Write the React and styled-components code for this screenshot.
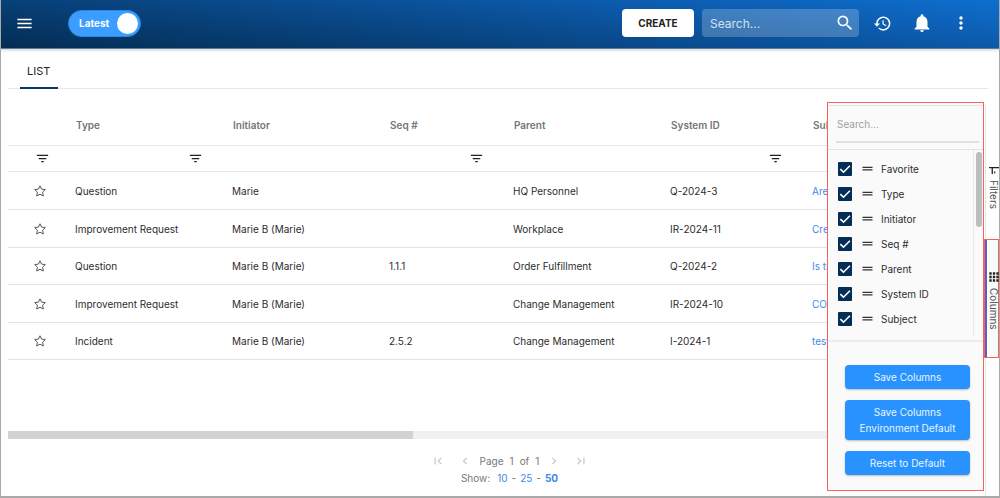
import React from "react";
import styled, { createGlobalStyle, css } from "styled-components";
import {
  MdMenu, MdSearch, MdHistory, MdNotifications, MdMoreVert, MdFilterList,
  MdDragHandle, MdFirstPage, MdLastPage, MdChevronLeft, MdChevronRight, MdApps,
} from "react-icons/md";

const GlobalStyle = createGlobalStyle`
  *, *::before, *::after { box-sizing: border-box; }
  body { margin: 0; background: #fff; }
  body, button, input { font-family: Inter, "Liberation Sans", sans-serif; }
  svg { display: block; }
`;

const plainButton = css`
  border: 0;
  padding: 0;
  background: none;
  color: inherit;
  cursor: pointer;
`;

const Frame = styled.div`
  display: flex;
  flex-direction: column;
  min-height: 100vh;
  border: solid #a9a9a9;
  border-width: 0 1px 2px;
  font-size: 10px;
  line-height: 16px;
  color: #2d2d2d;
  overflow: hidden;
`;

const Header = styled.header`
  display: flex;
  align-items: center;
  height: 49px;
  padding: 0 19px 2px 14px;
  background: linear-gradient(6deg, #042d54 0%, #073c70 25%, #0a4c90 50%, #0c5bad 72%, #0e6fce 100%);
  border-bottom: 1px solid #587ca5;
  box-shadow: 0 1px 3px rgba(0, 0, 0, 0.2);
  color: #fff;
`;

const IconButton = styled.button`
  ${plainButton}
  display: flex;
  align-items: center;
  justify-content: center;
  width: ${(p) => p.$width || "auto"};
`;

const Switch = styled.label`
  display: flex;
  align-items: center;
  justify-content: space-between;
  width: 73px;
  height: 27px;
  margin-left: 34px;
  padding: 0 2px 0 10px;
  border-radius: 14px;
  background: #3a9dff;
  border: 1px solid #2f86e0;
  font-size: 10px;
  font-weight: 700;
`;

const SwitchInput = styled.input`
  appearance: none;
  width: 21px;
  height: 21px;
  margin: 0;
  border-radius: 50%;
  background: #fff;
`;

const CreateButton = styled.button`
  ${plainButton}
  width: 72px;
  height: 28px;
  margin: 0 8px 0 auto;
  border-radius: 4px;
  background: #fff;
  color: #222;
  font-size: 10px;
  font-weight: 700;
`;

const SearchBox = styled.div`
  display: flex;
  align-items: center;
  width: 157px;
  height: 28px;
  margin-right: 4px;
  padding: 0 4px 0 8px;
  border-radius: 4px;
  background: rgba(255, 255, 255, 0.22);
`;

const HeaderInput = styled.input`
  flex: 1;
  min-width: 0;
  border: 0;
  padding: 0;
  outline: 0;
  background: none;
  color: #fff;
  font-size: 12px;
  &::placeholder { color: #d3e2f2; opacity: 1; }
`;

const Tabs = styled.nav`
  display: flex;
  height: 40px;
  margin: 0 11px 16px 7px;
  padding-left: 12px;
  border-bottom: 1px solid #e8e8e8;
`;

const Tab = styled.button`
  ${plainButton}
  height: 40px;
  padding: 6px 8px 0 7px;
  border-bottom: 2px solid #0a3763;
  font-size: 11px;
  color: #222;
`;

const Main = styled.main`
  flex: 1;
  display: grid;
  grid-template-columns: minmax(0, 1fr) 157px 15px;
  grid-template-rows: 1fr auto;
  padding-left: 7px;
`;

const GridArea = styled.section`
  display: flex;
  flex-direction: column;
  justify-content: space-between;
  overflow: hidden;
`;

const Table = styled.table`
  width: 1660px;
  table-layout: fixed;
  border-collapse: separate;
  border-spacing: 0;
`;

const HeadCell = styled.th`
  width: ${(p) => p.$width};
  height: 41px;
  padding: 0 0 0 1px;
  border-bottom: 1px solid #e8e8e8;
  text-align: left;
  font-weight: 600;
  color: #757575;
`;

const FilterCell = styled.td`
  height: 26px;
  padding: 0 29px 0 27px;
  border-bottom: 1px solid #e8e8e8;
`;

const FilterButton = styled(IconButton)`
  margin-left: ${(p) => (p.$start ? "0" : "auto")};
  color: #222;
`;

const Row = styled.tr`
  height: 38px;
  &:nth-child(2n + 3) { height: 37px; }
`;

const Cell = styled.td`
  padding: 0;
  border-bottom: 1px solid #e3e3e3;
`;

const StarCell = styled(Cell)`
  padding-left: 26px;
`;

const SubjectLink = styled.a`
  color: #3f87ea;
  text-decoration: none;
`;

const ScrollTrack = styled.div`
  height: 8px;
  background: #f0f0f0;
`;

const ScrollThumb = styled.div`
  width: 405px;
  height: 8px;
  background: #d3d3d3;
`;

const Pager = styled.footer`
  grid-column: 1 / -1;
  grid-row: 2;
  display: flex;
  flex-direction: column;
  align-items: center;
  padding: 13px 0 10px 12px;
  color: #777;
`;

const PagerLine = styled.div`
  display: flex;
  align-items: center;
  gap: ${(p) => p.$gap};
  height: 17px;
`;

const PageButton = styled(IconButton)`
  margin: 0 ${(p) => (p.$outer ? "5px" : "2px")};
  color: #c4c4c4;
`;

const PagerLabel = styled.span`
  margin-right: 3px;
`;

const PageLink = styled.a`
  color: #3f87ea;
  font-weight: ${(p) => (p.$current ? 700 : 400)};
  text-decoration: none;
`;

const Panel = styled.aside`
  grid-column: 2;
  grid-row: 1 / 3;
  display: flex;
  flex-direction: column;
  margin: -3px 0 5px;
  border: 1px solid #f4645c;
  background: #fafafa;
  z-index: 1;
`;

const PanelSearch = styled.div`
  padding: 6px 4px 6px 8px;
  margin-top: 2px;
  border-top: 1px solid #e6e6e6;
  border-bottom: 1px solid #e3e3e3;
`;

const PanelInput = styled.input`
  display: block;
  width: 100%;
  height: 31px;
  padding: 0 0 5px 1px;
  border: 0;
  border-bottom: 2px solid #e0e0e0;
  outline: 0;
  background: none;
  font-size: 10px;
  &::placeholder { color: #a0a0a0; opacity: 1; }
`;

const ColumnArea = styled.div`
  display: flex;
  height: 192px;
  padding-bottom: 5px;
  border-bottom: 2px solid #ececec;
`;

const ColumnList = styled.ul`
  flex: 1;
  margin: 0;
  padding: 6px 0 0 10px;
  border-right: 1px solid #e8e8e8;
  list-style: none;
`;

const ColumnItem = styled.li`
  height: 25px;
`;

const ColumnLabel = styled.label`
  display: flex;
  align-items: center;
  height: 25px;
`;

const CheckHolder = styled.span`
  display: grid;
  width: 14px;
  height: 14px;
  margin-right: 8px;
  & > * { grid-area: 1 / 1; }
`;

const CheckInput = styled.input`
  appearance: none;
  width: 14px;
  height: 14px;
  margin: 0;
  border-radius: 1px;
  background: #052e56;
`;

const DragIcon = styled(MdDragHandle)`
  margin-right: 6px;
  color: #333;
`;

const PanelScroll = styled.div`
  width: 9px;
  padding: 2px 0 0 2px;
`;

const PanelThumb = styled.div`
  width: 6px;
  height: 75px;
  border-radius: 3px;
  background: #bdbdbd;
`;

const PanelActions = styled.div`
  display: flex;
  flex-direction: column;
  gap: 11px;
  padding: 23px 13px 0 17px;
`;

const ActionButton = styled.button`
  ${plainButton}
  padding: 4px 8px;
  border-radius: 4px;
  background: #2893ff;
  box-shadow: 0 1px 2px rgba(0, 0, 0, 0.25);
  color: #eaf4ff;
  font-size: 10px;
  line-height: 16px;
`;

const SideBar = styled.div`
  grid-column: 3;
  grid-row: 1 / 3;
  display: flex;
  flex-direction: column;
  padding-top: 57px;
  border-left: 1px solid #fff;
  box-shadow: inset 1px 0 #e6e6e6;
`;

const SideTab = styled.button`
  ${plainButton}
  display: flex;
  align-items: center;
  justify-content: ${(p) => (p.$active ? "center" : "flex-start")};
  gap: 4px;
  height: ${(p) => (p.$active ? "119px" : "77px")};
  padding: ${(p) => (p.$active ? "2px 0 0 4px" : "4px 0 0 3px")};
  writing-mode: vertical-rl;
  font-size: 10px;
  line-height: 12px;
  color: #555;
  ${(p) => p.$active && css`
    margin-left: -1px;
    border: 1px solid #f4645c;
    box-shadow: inset 2px 0 #5560c8;
    background: #fafafa;
  `}
  svg { color: #222; flex: none; }
`;

const columns = [
  { key: "favorite", label: "", width: "67px", filter: true },
  { key: "type", label: "Type", width: "157px", filter: true },
  { key: "initiator", label: "Initiator", width: "157px" },
  { key: "seq", label: "Seq #", width: "124px", filter: true },
  { key: "parent", label: "Parent", width: "157px" },
  { key: "system", label: "System ID", width: "142px", filter: true },
  { key: "subject", label: "Subject", width: "auto" },
];

const rows = [
  ["Question", "Marie", "", "HQ Personnel", "Q-2024-3", "Are"],
  ["Improvement Request", "Marie B (Marie)", "", "Workplace", "IR-2024-11", "Cre"],
  ["Question", "Marie B (Marie)", "1.1.1", "Order Fulfillment", "Q-2024-2", "Is tr"],
  ["Improvement Request", "Marie B (Marie)", "", "Change Management", "IR-2024-10", "COS"],
  ["Incident", "Marie B (Marie)", "2.5.2", "Change Management", "I-2024-1", "test"],
];

const panelColumns = ["Favorite", "Type", "Initiator", "Seq #", "Parent", "System ID", "Subject"];

function CheckMark() {
  return (
    <svg width="14" height="14" viewBox="0 0 14 14" fill="none" stroke="#fff" strokeWidth="1.6" aria-hidden="true">
      <path d="M2.3 7.2 5.5 10.2 11.9 3.8" />
    </svg>
  );
}

function StarIcon() {
  return (
    <svg width="12" height="12" viewBox="0 0 12 12" fill="none" stroke="#444" strokeWidth="0.9" strokeLinejoin="round" aria-hidden="true">
      <path d="M6 .8 7.6 4.1 11.3 4.6 8.6 7.2 9.3 11 6 9.2 2.7 11 3.4 7.2 .7 4.6 4.4 4.1Z" />
    </svg>
  );
}

function SideFilterIcon() {
  return (
    <svg width="10" height="10" viewBox="0 0 10 10" fill="currentColor" aria-hidden="true">
      <path d="M0 1h10v1.3H0zM2.6 2h1.3v6H2.6zM5 5.4h1.3v1.8H5z" />
    </svg>
  );
}

export default function App() {
  return (
    <>
      <GlobalStyle />
      <Frame>
        <Header>
          <IconButton aria-label="Menu"><MdMenu size={19} /></IconButton>
          <Switch>
            Latest
            <SwitchInput type="checkbox" role="switch" defaultChecked />
          </Switch>
          <CreateButton>CREATE</CreateButton>
          <SearchBox>
            <HeaderInput type="search" aria-label="Search" placeholder="Search..." />
            <IconButton aria-label="Run search"><MdSearch size={20} /></IconButton>
          </SearchBox>
          <IconButton $width="39px" aria-label="History"><MdHistory size={19} /></IconButton>
          <IconButton $width="39px" aria-label="Notifications"><MdNotifications size={22} /></IconButton>
          <IconButton $width="39px" aria-label="More"><MdMoreVert size={20} /></IconButton>
        </Header>
        <Tabs>
          <Tab>LIST</Tab>
        </Tabs>
        <Main>
          <GridArea>
            <Table>
              <thead>
                <tr>
                  {columns.map((c) => (
                    <HeadCell key={c.key} $width={c.width} aria-label={c.label || "Favorite"}>{c.label}</HeadCell>
                  ))}
                </tr>
                <tr>
                  {columns.map((c) => (
                    <FilterCell key={c.key}>
                      {c.filter && (
                        <FilterButton $start={c.key === "favorite"} aria-label={`Filter ${c.label || "Favorite"}`}>
                          <MdFilterList size={15} />
                        </FilterButton>
                      )}
                    </FilterCell>
                  ))}
                </tr>
              </thead>
              <tbody>
                {rows.map((r, i) => (
                  <Row key={i}>
                    <StarCell>
                      <IconButton aria-label="Mark as favorite"><StarIcon /></IconButton>
                    </StarCell>
                    {r.slice(0, 5).map((v, j) => <Cell key={j}>{v}</Cell>)}
                    <Cell><SubjectLink href="#subject">{r[5]}</SubjectLink></Cell>
                  </Row>
                ))}
              </tbody>
            </Table>
            <ScrollTrack><ScrollThumb /></ScrollTrack>
          </GridArea>
          <Panel>
            <PanelSearch>
              <PanelInput type="search" aria-label="Search columns" placeholder="Search..." />
            </PanelSearch>
            <ColumnArea>
              <ColumnList>
                {panelColumns.map((name) => (
                  <ColumnItem key={name}>
                    <ColumnLabel>
                      <CheckHolder>
                        <CheckInput type="checkbox" defaultChecked />
                        <CheckMark />
                      </CheckHolder>
                      <DragIcon size={15} />
                      {name}
                    </ColumnLabel>
                  </ColumnItem>
                ))}
              </ColumnList>
              <PanelScroll><PanelThumb /></PanelScroll>
            </ColumnArea>
            <PanelActions>
              <ActionButton>Save Columns</ActionButton>
              <ActionButton>Save Columns<br />Environment Default</ActionButton>
              <ActionButton>Reset to Default</ActionButton>
            </PanelActions>
          </Panel>
          <SideBar>
            <SideTab><SideFilterIcon />Filters</SideTab>
            <SideTab $active><MdApps size={14} />Columns</SideTab>
          </SideBar>
          <Pager>
            <PagerLine $gap="6px">
              <PageButton $outer aria-label="First page"><MdFirstPage size={14} /></PageButton>
              <PageButton aria-label="Previous page"><MdChevronLeft size={14} /></PageButton>
              <span>Page</span><span>1</span><span>of</span><span>1</span>
              <PageButton aria-label="Next page"><MdChevronRight size={14} /></PageButton>
              <PageButton $outer aria-label="Last page"><MdLastPage size={14} /></PageButton>
            </PagerLine>
            <PagerLine $gap="4px">
              <PagerLabel>Show:</PagerLabel>
              <PageLink href="#10">10</PageLink>-
              <PageLink href="#25">25</PageLink>-
              <PageLink href="#50" $current>50</PageLink>
            </PagerLine>
          </Pager>
        </Main>
      </Frame>
    </>
  );
}
